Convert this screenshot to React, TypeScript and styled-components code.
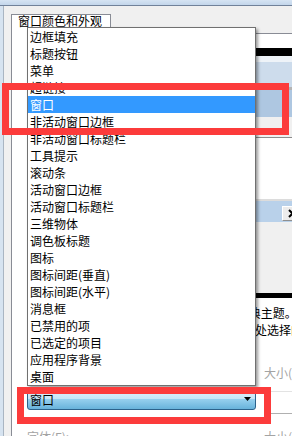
import React from 'react'
import styled, { createGlobalStyle } from 'styled-components'

const GlobalStyle = createGlobalStyle`
  html, body {
    margin: 0;
    padding: 0;
    overflow: hidden;
    background: #f0f0f0;
  }
  #root {
    width: 292px;
    height: 436px;
  }
`

const Screen = styled.div`
  position: relative;
  width: 292px;
  height: 436px;
  overflow: hidden;
  background: #f0f0f0;
  font-family: "Noto Sans CJK SC", "Microsoft YaHei", sans-serif;
  font-size: 12px;
  color: #000;
`

const TitleEdge = styled.div`
  height: 5px;
  background: linear-gradient(#d6e4f3, #c3d6eb);
  border-bottom: 1px solid #71829a;
`

const Frame = styled.div`
  display: flex;
  height: 430px;
`

const SideEdge = styled.div`
  flex: none;
  width: 3px;
  background: #d6e3f0;
  border-right: 1px solid #a9b5c2;
`

const Client = styled.div`
  flex: 1;
  min-width: 0;
  padding: 8px 0 0 7px;
`

const TabStrip = styled.div`
  display: flex;
`

const Tab = styled.div`
  position: relative;
  z-index: 1;
  width: 92px;
  height: 19px;
  margin-bottom: -1px;
  padding-left: 6px;
  line-height: 12px;
  background: #fff;
  border: 1px solid #898c95;
  border-bottom: none;
  white-space: nowrap;
`

const TabPage = styled.div`
  width: 420px;
  height: 420px;
  padding: 14px 0 0 15px;
  background: #fff;
  border-top: 1px solid #898c95;
  border-left: 1px solid #898c95;
`

const Preview = styled.div`
  display: flex;
  flex-direction: column;
  width: 400px;
`

const Band = styled.div<{ $h: number; $bg: string }>`
  height: ${({ $h }) => $h}px;
  background: ${({ $bg }) => $bg};
`

const ScrollBand = styled.div`
  display: flex;
  height: 21px;
  padding: 5px 0 0 255px;
  box-sizing: border-box;
  background: #b9d1ea;
`

const ArrowButton = styled.div`
  display: flex;
  align-items: center;
  justify-content: center;
  width: 16px;
  height: 13px;
  background: #ececec;
  border: 1px solid #8f8f8f;
  border-top-color: #fff;
  border-left-color: #fff;
`

const Description = styled.p`
  margin: 6px 0 0;
  line-height: 17px;
  white-space: nowrap;
`

const FieldRow = styled.div<{ $gap: number }>`
  display: grid;
  grid-template-columns: 229px 80px;
  column-gap: 8px;
  margin-top: ${({ $gap }) => $gap}px;
`

const Label = styled.div<{ $disabled?: boolean }>`
  line-height: 17px;
  white-space: nowrap;
  color: ${({ $disabled }) => ($disabled ? '#a3a3a3' : '#000')};
`

const Combo = styled.div`
  display: flex;
  align-items: center;
  justify-content: space-between;
  height: 20px;
  padding: 0 4px 0 2px;
  line-height: 17px;
  border: 1px solid #2c628b;
  border-radius: 3px;
  background: linear-gradient(#e5f4fc 0%, #c4e5f6 50%, #98d1ef 50%, #68b3db 100%);
`

const SizeField = styled.div`
  height: 21px;
  margin-top: 3px;
  border: 1px solid #e3e3e3;
  border-bottom-color: #b0b0b0;
`

const DropList = styled.ul`
  position: absolute;
  z-index: 2;
  top: 27px;
  left: 27px;
  width: 227px;
  margin: 0;
  padding: 0;
  list-style: none;
  background: #fff;
  border: 1px solid #707070;
  box-shadow: 2px 2px 3px rgba(0, 0, 0, 0.4);
`

const Item = styled.li<{ $selected?: boolean }>`
  height: 17px;
  padding-left: 2px;
  line-height: 17px;
  white-space: nowrap;
  background: ${({ $selected }) => ($selected ? '#3399ff' : 'transparent')};
  color: ${({ $selected }) => ($selected ? '#fff' : '#000')};
`

const Callout = styled.div<{ $x: number; $y: number; $w: number; $h: number }>`
  position: absolute;
  z-index: 3;
  left: ${({ $x }) => $x}px;
  top: ${({ $y }) => $y}px;
  width: ${({ $w }) => $w}px;
  height: ${({ $h }) => $h}px;
  box-sizing: border-box;
  border: 7px solid #fc3b3b;
  pointer-events: none;
`

const items = [
  '边框填充',
  '标题按钮',
  '菜单',
  '超链接',
  '窗口',
  '非活动窗口边框',
  '非活动窗口标题栏',
  '工具提示',
  '滚动条',
  '活动窗口边框',
  '活动窗口标题栏',
  '三维物体',
  '调色板标题',
  '图标',
  '图标间距(垂直)',
  '图标间距(水平)',
  '消息框',
  '已禁用的项',
  '已选定的项目',
  '应用程序背景',
  '桌面',
]

const previewTop: [number, string][] = [
  [8, '#000'],
  [6, '#eef3f8'],
  [25, '#cddcec'],
  [3, '#b4b4b4'],
  [27, '#aec7e1'],
  [20, '#f0f0f0'],
  [1, '#8c8c8c'],
  [61, '#fff'],
  [2, '#dcdcdc'],
]

const previewBottom: [number, string][] = [
  [71, '#f0f0f0'],
  [5, '#000'],
]

export default function App() {
  const selected = '窗口'

  return (
    <Screen>
      <GlobalStyle />
      <TitleEdge />
      <Frame>
        <SideEdge />
        <Client>
          <TabStrip>
            <Tab>窗口颜色和外观</Tab>
          </TabStrip>
          <TabPage>
            <Preview>
              {previewTop.map(([h, bg], i) => (
                <Band key={i} $h={h} $bg={bg} />
              ))}
              <ScrollBand>
                <ArrowButton>
                  <svg width="6" height="9" viewBox="0 0 6 9">
                    <path d="M1 1 L4.5 4.5 L1 8" fill="none" stroke="#000" strokeWidth="2" />
                  </svg>
                </ArrowButton>
              </ScrollBand>
              {previewBottom.map(([h, bg], i) => (
                <Band key={i} $h={h} $bg={bg} />
              ))}
            </Preview>

            <Description>
              此处的设置仅适用于 Windows 7 基本或经典主题。
              <br />
              选择其他主题，颜色和字体不会生效。在此处选择的项目
            </Description>

            <FieldRow $gap={26}>
              <Label>项目(I):</Label>
              <Label $disabled>大小(Z):</Label>
            </FieldRow>
            <FieldRow $gap={7}>
              <Combo>
                <span>{selected}</span>
                <svg width="7" height="4" viewBox="0 0 7 4">
                  <polygon points="0,0 7,0 3.5,4" fill="#000" />
                </svg>
              </Combo>
              <SizeField />
            </FieldRow>
            <FieldRow $gap={14}>
              <Label $disabled>字体(F):</Label>
              <Label $disabled>大小(E):</Label>
            </FieldRow>
          </TabPage>
        </Client>
      </Frame>

      <DropList>
        {items.map((name) => (
          <Item key={name} $selected={name === selected}>
            {name}
          </Item>
        ))}
      </DropList>

      <Callout $x={2} $y={83} $w={287} $h={52} />
      <Callout $x={17} $y={387} $w={254} $h={37} />
    </Screen>
  )
}
